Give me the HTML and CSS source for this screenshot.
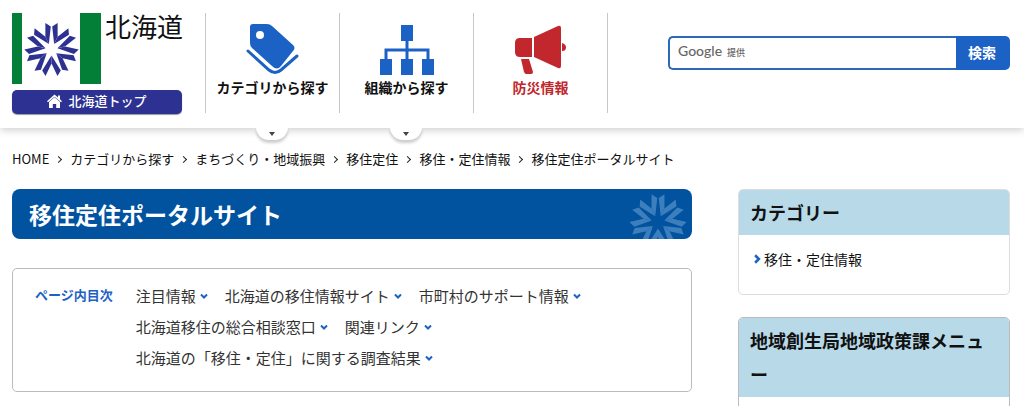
FILE: index.html
```html
<!DOCTYPE html>
<html lang="ja">
<head>
  <meta charset="UTF-8">
  <meta name="viewport" content="width=device-width, initial-scale=1.0">
  <title>移住定住ポータルサイト</title>
  <link rel="stylesheet" href="styles.css">
</head>
<body>

<!-- Shared shapes -->
<svg class="defs" width="0" height="0" aria-hidden="true">
  <symbol id="emblem" viewBox="-28 -28 56 56">
    <g id="arm">
      <path d="M0.700 -22.500L6 -26V-12.500L2.600 -5.400Z"/>
      <path d="M-0.700 -22.500L-6 -26V-12.500L-2.600 -5.400Z"/>
    </g>
    <use href="#arm" transform="rotate(51.430)"/>
    <use href="#arm" transform="rotate(102.860)"/>
    <use href="#arm" transform="rotate(154.290)"/>
    <use href="#arm" transform="rotate(205.710)"/>
    <use href="#arm" transform="rotate(257.140)"/>
    <use href="#arm" transform="rotate(308.570)"/>
  </symbol>
  <symbol id="chevron" viewBox="0 0 8 8">
    <path d="M1 2.500L4 5.500L7 2.500" fill="none" stroke="currentColor" stroke-width="2"/>
  </symbol>
</svg>

<header class="header">
  <div class="brand">
    <div class="logo">
      <svg width="90" height="71" viewBox="0 0 90 71" aria-hidden="true">
        <rect width="10" height="71" fill="#047f38"/>
        <rect x="68" width="21" height="71" fill="#047f38"/>
        <use href="#emblem" x="11" y="8" width="57" height="57" fill="#2d3192"/>
      </svg>
      <span class="logo-text">北海道</span>
    </div>
    <a class="top-link" href="#">
      <svg width="15" height="14" viewBox="0 0 15 14" aria-hidden="true">
        <path d="M7.500 0.500L11 3.500V1.500H13V5.300L15 7.200L14 8.300L7.500 2.700L1 8.300L0 7.200Z" fill="#fff"/>
        <path d="M7.500 3.200L13 8V14H9.200V10H5.800V14H2V8Z" fill="#fff"/>
      </svg>
      北海道トップ
    </a>
  </div>

  <nav class="nav">
    <div class="nav-item">
      <a href="#">
        <svg width="54" height="54" viewBox="0 0 54 54" aria-hidden="true">
          <path fill-rule="evenodd" d="M7 2H21Q24 2 26 4L47 23Q50 26 47 29L35 44Q31 49 26 44L6 26Q4 24 4 21V5Q4 2 7 2ZM14 9A4 4 0 1 0 14 17A4 4 0 1 0 14 9Z" fill="#1c62c4"/>
          <path d="M2 29L23 48Q29 53 35 48L51 34" fill="none" stroke="#1c62c4" stroke-width="3" stroke-linecap="round"/>
        </svg>
        <span>カテゴリから探す</span>
      </a>
      <button class="nav-open" type="button" aria-label="カテゴリから探すを開く"></button>
    </div>
    <div class="nav-item">
      <a href="#">
        <svg width="54" height="54" viewBox="0 0 54 54" aria-hidden="true">
          <g fill="#1c62c4">
            <rect x="21" y="3" width="12" height="16"/>
            <rect x="0" y="37" width="12" height="16"/>
            <rect x="21" y="37" width="12" height="16"/>
            <rect x="42" y="37" width="12" height="16"/>
          </g>
          <path d="M27 18V38M6 38V28H48V38" fill="none" stroke="#1c62c4" stroke-width="3"/>
        </svg>
        <span>組織から探す</span>
      </a>
      <button class="nav-open" type="button" aria-label="組織から探すを開く"></button>
    </div>
    <div class="nav-item nav-alert">
      <a href="#">
        <svg width="54" height="54" viewBox="0 0 54 54" aria-hidden="true">
          <g fill="#c1272d">
            <path d="M6 16H18V35H6Q1 35 1 30V21Q1 16 6 16Z"/>
            <path d="M20 15L44 4Q47 3 47 6V44Q47 47 44 46L20 35Z"/>
            <path d="M48 21Q52 22 52 25.500Q52 29 48 29Z"/>
            <path d="M7 37H15L19 50Q19 52 17 52H12Q11 52 10 50Z"/>
          </g>
        </svg>
        <span>防災情報</span>
      </a>
    </div>
  </nav>

  <form class="search">
    <div class="search-field">
      <input type="text" id="keyword" name="keyword">
      <label for="keyword"><span class="google">Google</span> 提供</label>
    </div>
    <button type="button">検索</button>
  </form>
</header>

<ol class="breadcrumb">
  <li><a href="#">HOME</a></li>
  <li><a href="#">カテゴリから探す</a></li>
  <li><a href="#">まちづくり・地域振興</a></li>
  <li><a href="#">移住定住</a></li>
  <li><a href="#">移住・定住情報</a></li>
  <li>移住定住ポータルサイト</li>
</ol>

<div class="page">
  <main>
    <div class="title">
      <h1>移住定住ポータルサイト</h1>
      <svg class="title-mark" width="60" height="60" aria-hidden="true"><use href="#emblem"/></svg>
    </div>

    <section class="toc">
      <h2>ページ内目次</h2>
      <ul>
        <li><a href="#">注目情報<svg width="8" height="8"><use href="#chevron"/></svg></a></li>
        <li><a href="#">北海道の移住情報サイト<svg width="8" height="8"><use href="#chevron"/></svg></a></li>
        <li><a href="#">市町村のサポート情報<svg width="8" height="8"><use href="#chevron"/></svg></a></li>
        <li><a href="#">北海道移住の総合相談窓口<svg width="8" height="8"><use href="#chevron"/></svg></a></li>
        <li><a href="#">関連リンク<svg width="8" height="8"><use href="#chevron"/></svg></a></li>
        <li><a href="#">北海道の「移住・定住」に関する調査結果<svg width="8" height="8"><use href="#chevron"/></svg></a></li>
      </ul>
    </section>
  </main>

  <aside>
    <section class="side-box">
      <h2>カテゴリー</h2>
      <ul>
        <li><a href="#"><svg class="side-arrow" width="10" height="10"><use href="#chevron"/></svg>移住・定住情報</a></li>
      </ul>
    </section>
    <section class="side-box side-menu">
      <h2>地域創生局地域政策課メニュー</h2>
      <ul></ul>
    </section>
  </aside>
</div>

</body>
</html>
```
FILE: styles.css
```css
* { box-sizing: border-box; }
html { overflow: hidden; }
body {
  margin: 0;
  background: #fff;
  color: #111;
  font-family: "Noto Sans CJK JP", sans-serif;
  font-size: 14px;
}
a { color: inherit; text-decoration: none; }
ul, ol { list-style: none; margin: 0; padding: 0; }
svg { display: block; flex: none; }
.defs { position: absolute; }

/* Header */
.header {
  display: flex;
  align-items: flex-start;
  padding: 13px 14px 14px 12px;
  box-shadow: 0 2px 8px rgba(0, 0, 0, 0.2);
}
.brand { width: 170px; margin-right: 23px; }
.logo { display: flex; gap: 3px; }
.logo-text { font-size: 26px; line-height: 26px; white-space: nowrap; }
.top-link {
  display: flex;
  justify-content: center;
  align-items: center;
  gap: 6px;
  height: 24px;
  margin-top: 6px;
  padding-bottom: 3px;
  border-radius: 5px;
  background: #2d3192;
  box-shadow: 0 1px 1px rgba(0, 0, 0, 0.4);
  color: #fff;
  font-size: 13px;
  font-weight: 500;
}
.nav { display: flex; border-left: 1px solid #c8c8c8; }
.nav-item {
  position: relative;
  width: 134px;
  height: 100px;
  padding-top: 9px;
  border-right: 1px solid #c8c8c8;
}
.nav-item a {
  display: flex;
  flex-direction: column;
  align-items: center;
  font-weight: bold;
  line-height: 22px;
  white-space: nowrap;
}
.nav-alert a { color: #c1272d; }
.nav-open {
  position: absolute;
  top: 114px;
  left: 50px;
  width: 32px;
  height: 13px;
  padding: 0;
  border: none;
  border-radius: 0 0 16px 16px;
  background: #fff;
  box-shadow: 0 3px 3px rgba(0, 0, 0, 0.2);
  cursor: pointer;
}
.nav-open::before {
  content: "";
  display: block;
  width: 0;
  margin: 0 auto;
  border: 3px solid transparent;
  border-top: 4px solid #444;
  border-bottom: none;
}
.search { display: flex; width: 342px; margin: 23px 0 0 auto; }
.search-field { position: relative; flex: 1; }
.search input {
  display: block;
  width: 100%;
  height: 34px;
  padding: 0 8px;
  border: 2px solid #2a6ab8;
  border-right: none;
  border-radius: 5px 0 0 5px;
  font: inherit;
}
.search label {
  position: absolute;
  top: 1px;
  left: 10px;
  color: #666;
  font-size: 9px;
  font-weight: 500;
  line-height: 28px;
  cursor: text;
}
.google { margin-right: 3px; font-family: Lato, sans-serif; font-size: 14px; }
.search button {
  width: 54px;
  height: 34px;
  padding: 0 2px 2px 0;
  border: none;
  border-radius: 0 5px 5px 0;
  background: #1c62c4;
  color: #fff;
  font: inherit;
  font-weight: bold;
  cursor: pointer;
}

/* Breadcrumb */
.breadcrumb {
  display: flex;
  flex-wrap: wrap;
  padding: 21px 14px 20px 12px;
  font-size: 13px;
  line-height: 20px;
}
.breadcrumb li { display: flex; align-items: center; }
.breadcrumb li + li::before {
  content: "";
  width: 4px;
  height: 4px;
  margin: 0 9px 0 7px;
  border: solid #222;
  border-width: 1px 1px 0 0;
  transform: rotate(45deg);
}

/* Page columns */
.page {
  display: grid;
  grid-template-columns: 5fr 2fr;
  gap: 46px;
  padding: 0 14px 0 12px;
}
.title {
  display: flex;
  justify-content: space-between;
  height: 50px;
  padding: 0 4px 0 17px;
  overflow: hidden;
  border-radius: 8px;
  background: #0153a0;
  color: #fff;
}
.title h1 { margin: 0; font-size: 23px; line-height: 50px; }
.title-mark { margin-top: 3px; fill: #3d7fbd; }
.toc {
  display: flex;
  gap: 23px;
  margin-top: 29px;
  padding: 11px 80px 18px 22px;
  border: 1px solid #bbb;
  border-radius: 5px;
}
.toc h2 {
  flex: none;
  margin: 0;
  color: #1c62c4;
  font-size: 13px;
  line-height: 30px;
}
.toc ul { display: flex; flex-wrap: wrap; column-gap: 17px; }
.toc a {
  display: flex;
  align-items: center;
  gap: 4px;
  color: #333;
  font-size: 15px;
  line-height: 31px;
}
.toc svg, .side-arrow { color: #1c62c4; }

/* Sidebar */
.side-box {
  margin-bottom: 22px;
  overflow: hidden;
  border: 1px solid #ddd;
  border-radius: 5px;
}
.side-box h2 {
  margin: 0;
  padding: 5px 11px 6px;
  background: #b8d9e8;
  font-size: 18px;
  line-height: 34px;
}
.side-box ul { min-height: 59px; padding: 9px 13px 20px; }
.side-box a { display: flex; align-items: center; gap: 2px; line-height: 30px; }
.side-arrow { transform: rotate(-90deg); }
.side-menu { border-color: #bbb; }
```
